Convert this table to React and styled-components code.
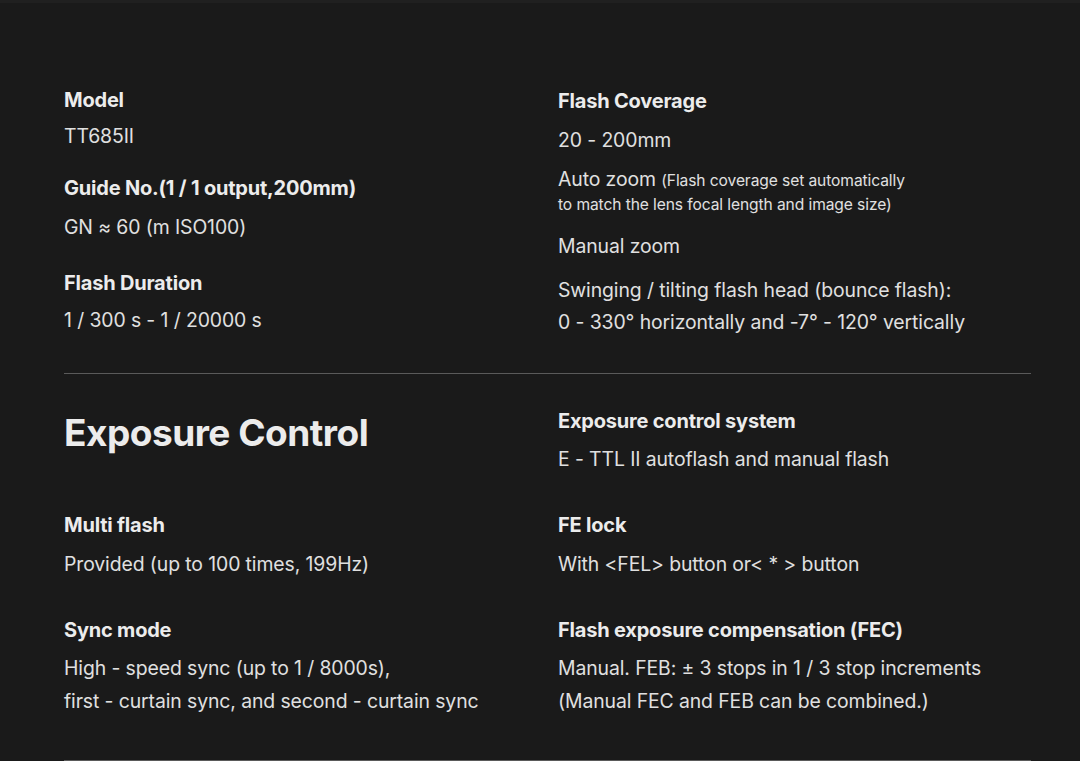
import styled, { createGlobalStyle } from 'styled-components';

const GlobalStyle = createGlobalStyle`
  html, body {
    margin: 0;
    padding: 0;
    background-color: #1a1a1a;
  }

  body {
    font-family: Inter, "Noto Sans", sans-serif;
    color: #e4e4e4;
  }
`;

const StyledPage = styled.main`
  min-height: 761px;
  padding: 0 49px 0 64px;
  background-color: #1a1a1a;
  border-top: solid 3px #202020;
  box-sizing: border-box;
`;

const StyledSection = styled.section`
  display: grid;
  grid-template-columns: 494px 1fr;
  row-gap: ${({ $rowGap }) => $rowGap || '0'};
  padding: ${({ $pad }) => $pad};
  border-bottom: solid 1px #5a5a5a;
`;

const StyledColumn = styled.div`
  display: flex;
  flex-direction: column;
  gap: ${({ $gap }) => $gap || '0'};
  padding-top: ${({ $offset }) => $offset || '0'};
`;

const StyledSpec = styled.div`
  display: flex;
  flex-direction: column;
  gap: ${({ $gap }) => $gap || '8px'};
  margin-top: ${({ $push }) => $push || '0'};
`;

const StyledLabel = styled.h3`
  margin: 0;
  font-size: 20px;
  line-height: 28px;
  font-weight: 700;
  color: #ececec;
  letter-spacing: -0.2px;
`;

const StyledValue = styled.p`
  margin: 0;
  font-size: 19.4px;
  line-height: ${({ $lh }) => $lh || '32px'};
  font-weight: 400;
  color: #e0e0e0;
  letter-spacing: -0.1px;
`;

const StyledValueList = styled.div`
  display: flex;
  flex-direction: column;
  gap: 12px;
`;

const StyledNote = styled.p`
  margin: 0 0 2px;
  font-size: 19.4px;
  line-height: 22px;
  color: #e0e0e0;
  letter-spacing: -0.1px;

  small {
    font-size: 15.6px;
    line-height: 22px;
  }
`;

const StyledTitle = styled.h2`
  margin: 0;
  font-size: 37px;
  line-height: 52px;
  font-weight: 700;
  color: #ececec;
  letter-spacing: -0.5px;
`;

const Spec = ({ label, children, gap, push }) => (
  <StyledSpec $gap={gap} $push={push}>
    <StyledLabel>{label}</StyledLabel>
    {children}
  </StyledSpec>
);

const App = () => (
  <>
    <GlobalStyle />
    <StyledPage>
      <StyledSection $pad="83px 0 35px">
        <StyledColumn $gap="22px">
          <Spec label="Model" gap="6px">
            <StyledValue>TT685II</StyledValue>
          </Spec>
          <Spec label="Guide No.(1 / 1 output,200mm)" gap="9px">
            <StyledValue>GN ≈ 60 (m ISO100)</StyledValue>
          </Spec>
          <Spec label="Flash Duration" gap="7px" push="4px">
            <StyledValue>1 / 300 s - 1 / 20000 s</StyledValue>
          </Spec>
        </StyledColumn>
        <StyledColumn $offset="1px">
          <Spec label="Flash Coverage" gap="9px">
            <StyledValueList>
              <StyledValue>20 - 200mm</StyledValue>
              <StyledNote>
                Auto zoom <small>(Flash coverage set automatically</small>
                <br />
                <small>to match the lens focal length and image size)</small>
              </StyledNote>
              <StyledValue>Manual zoom</StyledValue>
              <StyledValue>
                Swinging / tilting flash head (bounce flash):
                <br />
                0 - 330° horizontally and -7° - 120° vertically
              </StyledValue>
            </StyledValueList>
          </Spec>
        </StyledColumn>
      </StyledSection>

      <StyledSection $pad="33px 0 42px" $rowGap="36px">
        <StyledTitle>Exposure Control</StyledTitle>
        <Spec label="Exposure control system">
          <StyledValue>E - TTL II autoflash and manual flash</StyledValue>
        </Spec>
        <Spec label="Multi flash" gap="9px">
          <StyledValue>Provided (up to 100 times, 199Hz)</StyledValue>
        </Spec>
        <Spec label="FE lock" gap="9px">
          <StyledValue>With &lt;FEL&gt; button or&lt; * &gt; button</StyledValue>
        </Spec>
        <Spec label="Sync mode">
          <StyledValue $lh="33px">
            High - speed sync (up to 1 / 8000s),
            <br />
            first - curtain sync, and second - curtain sync
          </StyledValue>
        </Spec>
        <Spec label="Flash exposure compensation (FEC)">
          <StyledValue $lh="33px">
            Manual. FEB: ± 3 stops in 1 / 3 stop increments
            <br />
            (Manual FEC and FEB can be combined.)
          </StyledValue>
        </Spec>
      </StyledSection>
    </StyledPage>
  </>
);

export default App;
